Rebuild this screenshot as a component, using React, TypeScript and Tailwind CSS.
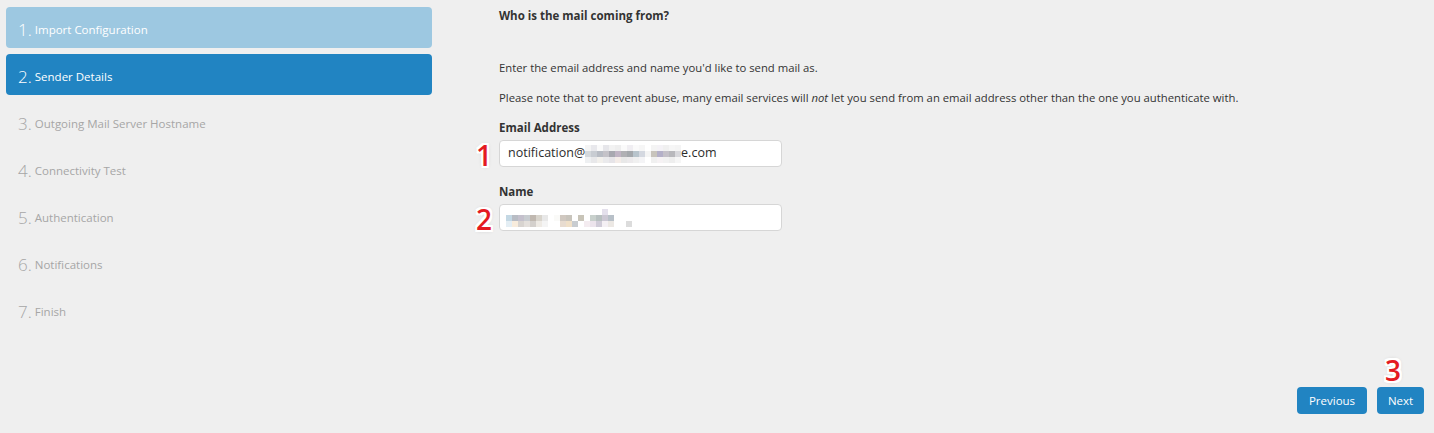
import React from 'react'

const steps = [
  'Import Configuration',
  'Sender Details',
  'Outgoing Mail Server Hostname',
  'Connectivity Test',
  'Authentication',
  'Notifications',
  'Finish',
]

const FONT = "font-['Open_Sans','Noto_Sans',sans-serif]"

// pixelated blur used in the screenshot to hide the domain / name
const emailMosaic = [
  ['#f4f4f4', '#e8e8ec', '#fafafa', '#e6e6ea', '#f2f2f2', '#eeeeee', '#fafafa', '#f0eef2', '#fafafa', '#f6f6f6', '#ffffff', '#f4f4f4', '#f4f2f6', '#f0f0f0', '#f6f6f6', '#f4f4f4'],
  ['#d4d8dc', '#c8ccd2', '#b8bcc4', '#c4c2c8', '#a8a8b0', '#c0b4c4', '#b0b0b4', '#a4a8ac', '#b8c4cc', '#d4d8e0', '#f4f4f4', '#c8c4bc', '#b4b0c8', '#c4c0c8', '#b8b8bc', '#d8d8dc'],
  ['#eef0f2', '#e8e8ea', '#f2f0ec', '#eaeaec', '#e6e4e8', '#f4ece8', '#e8e8e8', '#eceaec', '#f0f0f0', '#f4f4f6', '#ffffff', '#f0f0f0', '#f6f2f4', '#f2f2f2', '#eeeeee', '#f6f6f6'],
]

const nameMosaic = [
  ['#ffffff', '#ffffff', '#ffffff', '#ffffff', '#ffffff', '#ffffff', '#ffffff', '#ffffff', '#ffffff', '#ffffff', '#ffffff', '#ffffff', '#ffffff', '#ffffff', '#ffffff', '#ffffff', '#e4e0ec', '#ffffff', '#ffffff', '#ffffff', '#ffffff'],
  ['#c4d8e4', '#b8bcc4', '#c4c0cc', '#c8ccd0', '#c0b8b0', '#d8d4cc', '#e8e8e8', '#ffffff', '#fafaf8', '#d0c8c0', '#c8c4bc', '#ffffff', '#c8c4b8', '#ffffff', '#c8d0cc', '#b8c0c0', '#ccc8d4', '#b8c0c8', '#ffffff', '#ffffff', '#ffffff'],
  ['#e4eef4', '#f8ecdc', '#d8d4d0', '#e4e0dc', '#d4d0cc', '#eeeae4', '#f4f4f4', '#ffffff', '#ffffff', '#e8dcd0', '#f0e0c8', '#c8ccd0', '#ffffff', '#f4ecf0', '#ece4ec', '#d0ccd8', '#f4f0f4', '#ece8e4', '#ffffff', '#ffffff', '#dcdcdc'],
]

function Mosaic({ rows, cell }: { rows: string[][]; cell: string }) {
  return (
    <span className="inline-flex flex-col align-middle">
      {rows.map((row, r) => (
        <span key={r} className="flex">
          {row.map((c, i) => (
            <span key={i} className={cell} style={{ backgroundColor: c }} />
          ))}
        </span>
      ))}
    </span>
  )
}

function Marker({ n }: { n: number }) {
  return (
    <span className="font-['Open_Sans',sans-serif] text-[28px] font-semibold leading-none text-[#e41a22] [text-shadow:-2px_-2px_0_#fff,2px_-2px_0_#fff,-2px_2px_0_#fff,2px_2px_0_#fff,0_2px_0_#fff,2px_0_0_#fff,-2px_0_0_#fff,0_-2px_0_#fff,0_0_4px_#aaa]">
      {n}
    </span>
  )
}

export default function App() {
  return (
    <div className={`flex h-[433px] w-full bg-[#efefef] ${FONT} text-[#333]`}>
      {/* Steps */}
      <aside className="w-[438px] shrink-0 pl-[6px] pr-[6px] pt-[7px]">
        <ul className="flex flex-col gap-[6px]">
          {steps.map((s, i) => {
            const box =
              i === 0
                ? 'bg-[#9dc8e1] text-white'
                : i === 1
                  ? 'bg-[#2184c2] text-white'
                  : 'text-[#a6a6a6]'
            return (
              <li
                key={s}
                className={`flex h-[41px] items-center rounded-[4px] pl-[12px] pt-[4px] ${box}`}
              >
                <span className="text-[17px] font-light leading-none">{i + 1}.</span>
                <span className="ml-[3px] text-[11.5px]">{s}</span>
              </li>
            )
          })}
        </ul>
      </aside>

      {/* Content */}
      <main className="flex flex-1 flex-col pl-[61px] pr-[10px]">
        <h2 className="mt-[8px] text-[11.5px] font-bold leading-[16px]">
          Who is the mail coming from?
        </h2>
        <p className="mt-[36px] text-[11.3px] leading-[16px]">
          Enter the email address and name you'd like to send mail as.
        </p>
        <p className="mt-[14px] text-[11.3px] leading-[16px]">
          Please note that to prevent abuse, many email services will <em>not</em> let you send
          from an email address other than the one you authenticate with.
        </p>

        <label className="mt-[14px] text-[11.5px] font-bold leading-[16px]">Email Address</label>
        <div className="relative mt-[4px] w-[283px]">
          <span className="absolute right-full top-[1px] mr-[7px]">
            <Marker n={1} />
          </span>
          <div className="flex h-[27px] items-center rounded-[4px] border border-[#d6d6d6] bg-white pl-[8px] text-[12.5px] text-[#2c2c2c]">
            notification@
            <Mosaic rows={emailMosaic} cell="h-[6px] w-[6px]" />
            e.com
          </div>
        </div>

        <label className="mt-[17px] text-[11.5px] font-bold leading-[16px]">Name</label>
        <div className="relative mt-[4px] w-[283px]">
          <span className="absolute right-full top-[1px] mr-[7px]">
            <Marker n={2} />
          </span>
          <div className="flex h-[27px] items-center rounded-[4px] border border-[#d6d6d6] bg-white pl-[6px]">
            <Mosaic rows={nameMosaic} cell="h-[6px] w-[6px]" />
          </div>
        </div>

        <div className="mt-auto mb-[19px] flex justify-end gap-[10px]">
          <button className="h-[27px] w-[70px] rounded-[4px] bg-[#2184c2] text-[11.5px] text-white">
            Previous
          </button>
          <div className="relative">
            <span className="absolute left-[8px] -top-[31px]">
              <Marker n={3} />
            </span>
            <button className="h-[27px] w-[47px] rounded-[4px] bg-[#2184c2] text-[11.5px] text-white">
              Next
            </button>
          </div>
        </div>
      </main>
    </div>
  )
}
